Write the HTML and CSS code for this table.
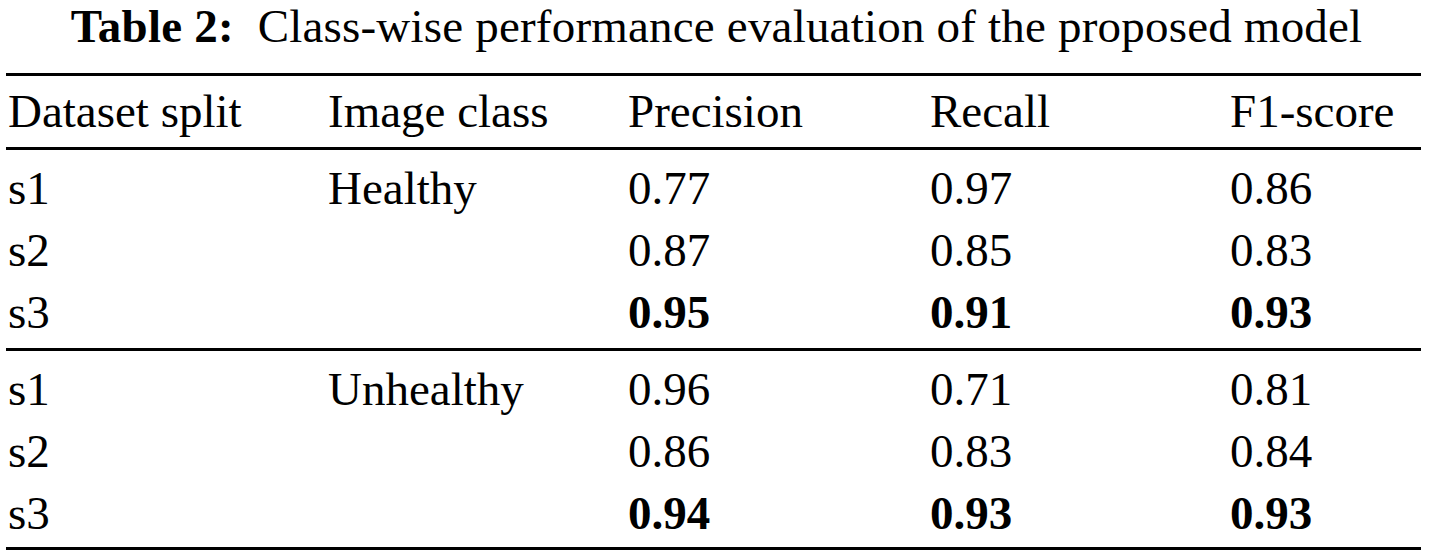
FILE: index.html
```html
<!DOCTYPE html>
<html>
<head>
<meta charset="utf-8">
<link rel="stylesheet" href="styles.css">
</head>
<body>
<div class="page">
  <div class="caption"><b>Table 2:</b>&nbsp; Class-wise performance evaluation of the proposed model</div>
  <table class="results">
    <thead>
      <tr><th class="c1">Dataset split</th><th class="c2">Image class</th><th class="c3">Precision</th><th class="c4">Recall</th><th class="c5">F1-score</th></tr>
    </thead>
    <tbody>
      <tr class="first"><td>s1</td><td>Healthy</td><td>0.77</td><td>0.97</td><td>0.86</td></tr>
      <tr><td>s2</td><td></td><td>0.87</td><td>0.85</td><td>0.83</td></tr>
      <tr class="last"><td>s3</td><td></td><td><b>0.95</b></td><td><b>0.91</b></td><td><b>0.93</b></td></tr>
    </tbody>
    <tbody>
      <tr class="first"><td>s1</td><td>Unhealthy</td><td>0.96</td><td>0.71</td><td>0.81</td></tr>
      <tr><td>s2</td><td></td><td>0.86</td><td>0.83</td><td>0.84</td></tr>
      <tr class="last"><td>s3</td><td></td><td><b>0.94</b></td><td><b>0.93</b></td><td><b>0.93</b></td></tr>
    </tbody>
  </table>
</div>
</body>
</html>
```
FILE: styles.css
```css
html, body {
  margin: 0;
  padding: 0;
  background: #fff;
}
.page {
  width: 1415px;
  padding-left: 6px;
  font-family: "Liberation Serif", "Times New Roman", serif;
  font-size: 47px;
  color: #000;
}
.caption {
  text-align: center;
  line-height: 52px;
  letter-spacing: 0.2px;
  margin: 0 0 21px 0;
  padding-left: 6px;
}
.results {
  width: 1415px;
  border-collapse: collapse;
  table-layout: fixed;
}
.results th, .results td {
  font-weight: normal;
  text-align: left;
  padding: 0 0 0 2px;
  line-height: 62px;
  white-space: nowrap;
}
.results td b { font-weight: bold; }
.results th.c1 { width: 318px; }
.results th.c2 { width: 298px; }
.results th.c3 { width: 300px; }
.results th.c4 { width: 298px; }
.results th.c5 { width: auto; }
.results thead tr {
  border-top: 3px solid #000;
  border-bottom: 3px solid #000;
}
.results thead th {
  padding-top: 4px;
  padding-bottom: 5px;
}
.results tbody + tbody {
  border-top: 3px solid #000;
}
.results tbody:last-child {
  border-bottom: 3px solid #000;
}
.results tr.first td { padding-top: 7px; }
.results tr.last td { padding-bottom: 5px; }
.results tbody:last-child tr.last td { padding-bottom: 3px; }
```
